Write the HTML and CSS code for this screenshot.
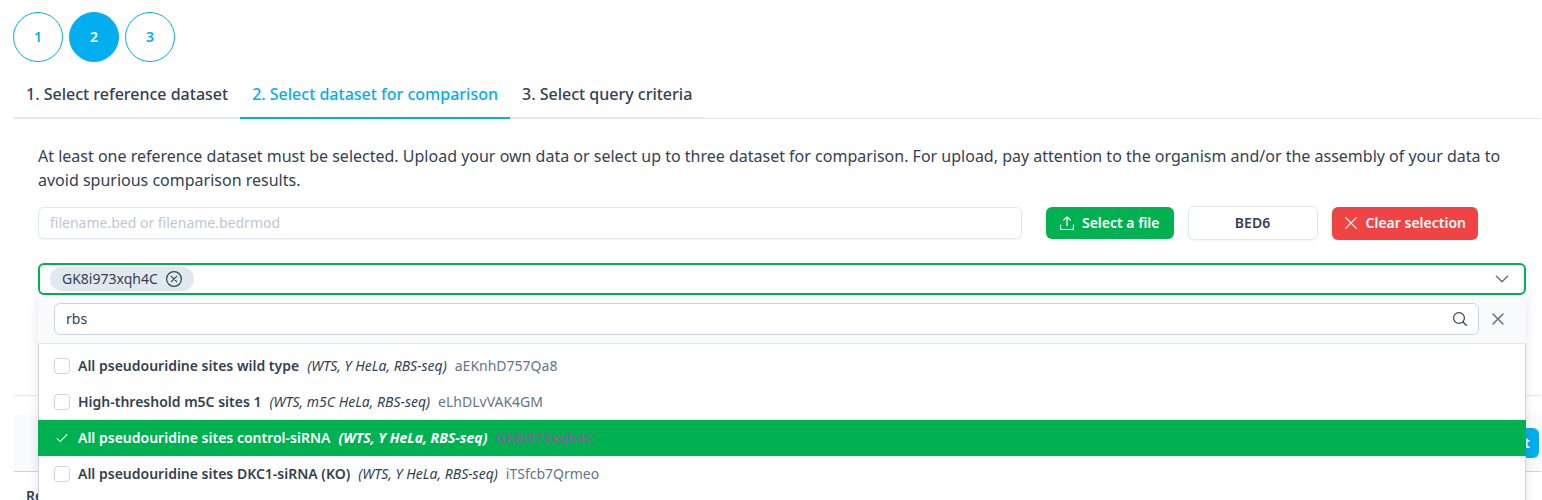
FILE: index.html
```html
<!DOCTYPE html>
<html lang="en">
<head>
<meta charset="utf-8">
<meta name="viewport" content="width=device-width, initial-scale=1">
<title>Compare datasets</title>
<link rel="stylesheet" href="styles.css">
</head>
<body>
<main class="page">
  <nav class="steps" aria-label="Steps">
    <button class="step" type="button">1</button>
    <button class="step step-active" type="button">2</button>
    <button class="step" type="button">3</button>
  </nav>

  <div class="tabs" role="tablist">
    <button class="tab" type="button" role="tab">1. Select reference dataset</button>
    <button class="tab tab-active" type="button" role="tab" aria-selected="true">2. Select dataset for comparison</button>
    <button class="tab" type="button" role="tab">3. Select query criteria</button>
  </div>

  <section class="panel" role="tabpanel">
    <p class="intro">At least one reference dataset must be selected. Upload your own data or select up to three dataset for comparison. For upload, pay attention to the organism and/or the assembly of your data to avoid spurious comparison results.</p>

    <div class="upload">
      <input class="filename" type="text" aria-label="File name" placeholder="filename.bed or filename.bedrmod">
      <div class="actions">
        <button class="btn btn-green" type="button">
          <svg class="icon" viewBox="0 0 14 14" aria-hidden="true"><path d="M7 9.7V.8M3.8 4 7 .8 10.2 4M.5 9v3.1c0 .8.6 1.4 1.4 1.4h10.2c.8 0 1.4-.6 1.4-1.4V9"/></svg>
          Select a file
        </button>
        <button class="btn btn-toggle" type="button">BED6</button>
        <button class="btn btn-red" type="button">
          <svg class="icon" viewBox="0 0 14 14" aria-hidden="true"><path d="m1.7 1.7 10.6 10.6m0-10.6L1.7 12.3"/></svg>
          Clear selection
        </button>
      </div>
    </div>

    <div class="multiselect">
      <div class="select-box" role="combobox" aria-expanded="true" aria-controls="options" aria-label="Datasets" tabindex="0">
        <span class="chip">GK8i973xqh4C
          <button class="plain" type="button" aria-label="Remove GK8i973xqh4C">
            <svg class="icon-16" viewBox="0 0 16 16" aria-hidden="true"><circle cx="8" cy="8" r="7.4"/><path d="m5.3 5.3 5.4 5.4m0-5.4-5.4 5.4"/></svg>
          </button>
        </span>
        <svg class="icon chevron" viewBox="0 0 14 14" aria-hidden="true"><path d="m1.4 4.2 5.6 5.6 5.6-5.6"/></svg>
      </div>

      <div class="overlay">
        <div class="filter">
          <div class="search">
            <input class="search-input" type="text" aria-label="Filter datasets" value="rbs">
            <svg class="icon" viewBox="0 0 14 14" aria-hidden="true"><circle cx="6" cy="6" r="5.4"/><path d="m10 10 3.5 3.5"/></svg>
          </div>
          <button class="plain close" type="button" aria-label="Close">
            <svg class="icon" viewBox="0 0 14 14" aria-hidden="true"><path d="m2 2 10 10M12 2 2 12"/></svg>
          </button>
        </div>
        <div class="options" id="options">
          <label class="option"><input class="check" type="checkbox"><b class="name">All pseudouridine sites wild type</b><i>(WTS, Y HeLa, RBS-seq)</i><span class="id">aEKnhD757Qa8</span></label>
          <label class="option"><input class="check" type="checkbox"><b class="name">High-threshold m5C sites 1</b><i>(WTS, m5C HeLa, RBS-seq)</i><span class="id">eLhDLvVAK4GM</span></label>
          <label class="option option-selected"><span class="check-wrap"><input class="check" type="checkbox" checked><svg class="tick" viewBox="0 0 14 14" aria-hidden="true"><path d="m1.3 7.6 3.4 3.5 8-8"/></svg></span><b class="name">All pseudouridine sites control-siRNA</b><i>(WTS, Y HeLa, RBS-seq)</i><span class="id">GK8i973xqh4C</span></label>
          <label class="option"><input class="check" type="checkbox"><b class="name">All pseudouridine sites DKC1-siRNA (KO)</b><i>(WTS, Y HeLa, RBS-seq)</i><span class="id">iTSfcb7Qrmeo</span></label>
        </div>
      </div>
    </div>
  </section>

  <section class="results">
    <div class="toolbar"><button class="btn btn-blue" type="button">Export</button></div>
    <table class="table"><thead><tr><th>Reference</th></tr></thead></table>
  </section>
</main>
</body>
</html>
```
FILE: styles.css
```css
* { box-sizing: border-box; }

body {
  height: 100vh;
  margin: 0;
  overflow: hidden;
  background: #fff;
  color: #334155;
  font: 16px/24px "Noto Sans", sans-serif;
}

button, input { font: inherit; color: inherit; }
button { cursor: pointer; }

svg { fill: none; stroke: currentColor; stroke-width: 1.2; stroke-linecap: round; stroke-linejoin: round; }
.icon { width: 14px; height: 14px; flex: none; }
.icon-16 { display: block; width: 16px; height: 16px; }

.plain { padding: 0; border: 0; background: none; }

.page { padding: 12px 0 0 14px; }

.steps { display: flex; gap: 6px; margin-left: -1px; }
.step {
  width: 50px;
  height: 50px;
  padding: 0;
  border: 1px solid #03aeef;
  border-radius: 50%;
  background: #fff;
  color: #03aeef;
  font-size: 14px;
  font-weight: 600;
}
.step-active { background: #03aeef; color: #fff; }

.tabs {
  display: flex;
  margin: 8px 1px 0 0;
  box-shadow: inset 0 -1px #e2e8f0;
}
.tab {
  padding: 12px 12px 11px;
  border: 0;
  border-bottom: 2px solid #e2e8f0;
  background: none;
  font-weight: 500;
}
.tab-active { border-color: #03aeef; color: #03aeef; }

.panel { padding: 25px 16px 100px 24px; }
.intro { margin: 0 0 14px; }

.upload { display: flex; align-items: center; gap: 24px; padding-right: 48px; }
.filename {
  flex: 1;
  min-width: 0;
  height: 32px;
  padding: 0 11px 2px;
  border: 1px solid #e2e8f0;
  border-radius: 6px;
  box-shadow: 0 1px 2px #1212170d;
  font-size: 14px;
}
.filename::placeholder { color: #bcc7d6; opacity: 1; }
.actions { display: flex; align-items: center; gap: 14px; }

.btn {
  display: flex;
  align-items: center;
  justify-content: center;
  gap: 8px;
  height: 32px;
  padding: 0 14px;
  border: 0;
  border-radius: 6px;
  color: #fff;
  font-size: 14px;
  font-weight: 600;
  white-space: nowrap;
}
.btn-green { background: #00b152; }
.btn-toggle {
  width: 130px;
  height: 34px;
  border: 1px solid #e2e8f0;
  background: #fff;
  color: #334155;
  box-shadow: 0 1px 2px #1212170d;
}
.btn-red { height: 33px; padding: 0 12px; background: #f04444; }
.btn-blue { height: 30px; padding: 0 9px; background: #03aeef; }

.multiselect { position: relative; margin-top: 23px; }
.select-box {
  display: flex;
  align-items: center;
  justify-content: space-between;
  height: 32px;
  padding: 0 15px 0 10px;
  border: 2px solid #00b152;
  border-radius: 6px;
}
.chip {
  display: flex;
  align-items: center;
  gap: 8px;
  height: 24px;
  padding: 0 12px;
  border-radius: 16px;
  background: #e2e8f0;
  font-size: 14px;
}
.chevron { stroke: #64748b; stroke-width: 1.5; }

.overlay {
  position: absolute;
  top: 100%;
  left: 0;
  right: 0;
  margin-top: 1px;
  border-radius: 6px;
  background: #fff;
  box-shadow: 0 2px 12px #0000001a;
  font-size: 14px;
}
.filter {
  display: flex;
  align-items: center;
  gap: 12px;
  padding: 7px 21px 8px 16px;
  border-bottom: 1px solid #e2e8f0;
  border-radius: 6px 6px 0 0;
  background: #f8fafc;
}
.search {
  display: flex;
  align-items: center;
  flex: 1;
  height: 32px;
  padding: 0 11px;
  border: 1px solid #cbd5e1;
  border-radius: 6px;
  background: #fff;
}
.search-input { flex: 1; min-width: 0; padding: 0; border: 0; outline: 0; background: none; }
.close { display: flex; color: #64748b; }
.close svg { stroke-width: 1.6; }

.options {
  padding: 4px 0 40px;
  border: solid #cbd5e1;
  border-width: 0 1px;
}
.option {
  display: flex;
  align-items: center;
  gap: 8px;
  height: 36px;
  padding: 0 15px;
}
.name { font-weight: 600; }
.id { color: #64748b; }
.option-selected {
  margin: 0 -1px;
  padding: 0 16px;
  background: #00b152;
  color: #fff;
  font-weight: 700;
}
.check {
  appearance: none;
  display: block;
  width: 16px;
  height: 16px;
  margin: 0;
  border: 1px solid #cbd5e1;
  border-radius: 4px;
  background: #fff;
}
.check-wrap { display: grid; place-items: center; }
.check-wrap > * { grid-area: 1 / 1; }
.check:checked { border-color: transparent; background: transparent; }
.tick { width: 12px; height: 12px; }

.results { margin-right: 1px; border-top: 1px solid #e2e8f0; padding-top: 19px; }
.toolbar {
  display: flex;
  align-items: center;
  justify-content: flex-end;
  height: 57px;
  padding: 0 2px;
  border-bottom: 1px solid #cbd5e1;
  background: #f8fafc;
}
.table { border-collapse: collapse; width: 100%; font-size: 14px; }
.table th { padding: 12px; text-align: left; font-weight: 600; }
```
